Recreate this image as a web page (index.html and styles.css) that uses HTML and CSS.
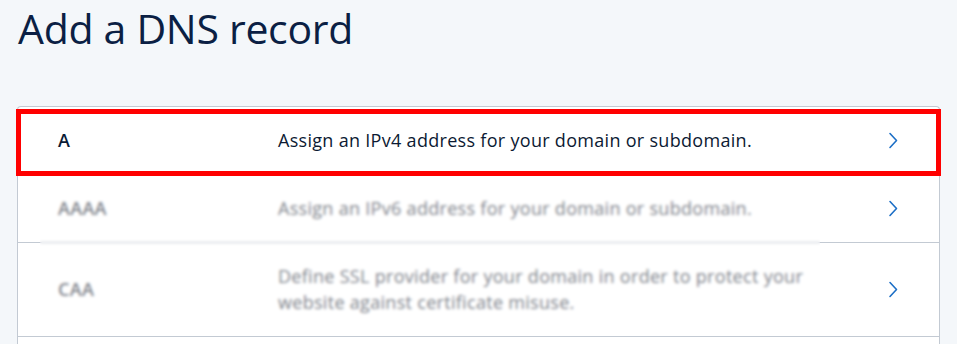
FILE: index.html
```html
<!DOCTYPE html>
<html lang="en">
<head>
<meta charset="utf-8">
<title>Add a DNS record</title>
<link rel="stylesheet" href="styles.css">
</head>
<body>
<main class="page">
  <h1 class="title">Add a DNS record</h1>
  <div class="card">
    <div class="row row-active">
      <span class="name">A</span>
      <span class="desc">Assign an IPv4 address for your domain or subdomain.</span>
      <svg class="chev" viewBox="0 0 10 17" width="10" height="17"><path d="M2 1.5 L8.5 8.5 L2 15.5" fill="none" stroke="#1d6fc6" stroke-width="1.6" stroke-linecap="round" stroke-linejoin="round"/></svg>
    </div>
    <div class="row row-muted">
      <span class="name">AAAA</span>
      <span class="desc">Assign an IPv6 address for your domain or subdomain.</span>
      <svg class="chev" viewBox="0 0 10 17" width="10" height="17"><path d="M2 1.5 L8.5 8.5 L2 15.5" fill="none" stroke="#1d6fc6" stroke-width="1.6" stroke-linecap="round" stroke-linejoin="round"/></svg>
    </div>
    <div class="row row-muted">
      <span class="name">CAA</span>
      <span class="desc">Define SSL provider for your domain in order to protect your website against certificate misuse.</span>
      <svg class="chev" viewBox="0 0 10 17" width="10" height="17"><path d="M2 1.5 L8.5 8.5 L2 15.5" fill="none" stroke="#1d6fc6" stroke-width="1.6" stroke-linecap="round" stroke-linejoin="round"/></svg>
    </div>
    <div class="row-stub"></div>
    <div class="blur-mask"></div>
    <div class="highlight"></div>
  </div>
</main>
</body>
</html>
```

FILE: styles.css
```css
html, body {
  margin: 0;
  padding: 0;
  background: #f4f7fa;
  overflow: hidden;
}

.page {
  padding: 0 17px;
  width: 923px;
}

.title {
  margin: 0;
  padding: 0 0 0 1px;
  height: 106px;
  box-sizing: border-box;
  font-family: "Open Sans", "Noto Sans", sans-serif;
  font-weight: 400;
  font-size: 41px;
  line-height: 56px;
  letter-spacing: -0.3px;
  color: #0b1f44;
}

.card {
  position: relative;
  background: #ffffff;
  border-left: 1px solid #c3cad3;
  border-right: 1px solid #c3cad3;
  border-top: 1px solid #c3cad3;
  border-radius: 4px 4px 0 0;
}

.row {
  display: flex;
  align-items: center;
  padding: 20px 40px 21px 40px;
  border-bottom: 1px solid #c3cad3;
  font-family: "Open Sans", "Noto Sans", sans-serif;
  font-size: 18px;
  line-height: 26px;
  letter-spacing: 0.3px;
}

.row-stub {
  height: 20px;
}

.name {
  width: 220px;
  flex: none;
}

.desc {
  width: 560px;
  flex: none;
}

.chev {
  margin-left: auto;
  margin-right: 1px;
  flex: none;
}

.row-active {
  color: #0c1a33;
}

.row-active .name {
  font-weight: 600;
  color: #0b1b36;
}

.row-muted {
  color: #7f848c;
}

.row-muted .name {
  font-weight: 600;
}

.blur-mask {
  position: absolute;
  left: 22px;
  top: 71px;
  width: 780px;
  height: 155px;
  backdrop-filter: blur(1.6px);
  -webkit-backdrop-filter: blur(1.6px);
  pointer-events: none;
}

.highlight {
  position: absolute;
  left: -2px;
  top: 2px;
  width: 915px;
  height: 57px;
  border: 5px solid #ff0000;
  pointer-events: none;
}
```
